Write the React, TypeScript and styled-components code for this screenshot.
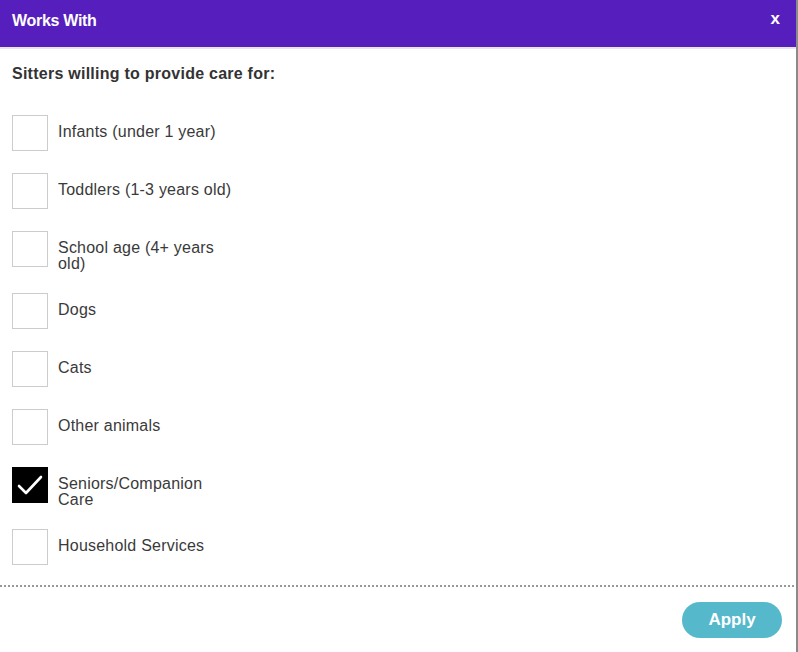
import React, { useState } from "react";
import styled, { createGlobalStyle } from "styled-components";

const GlobalStyle = createGlobalStyle`
  html, body {
    margin: 0;
    padding: 0;
    background: #ffffff;
  }
  body {
    font-family: "Liberation Sans", Arial, sans-serif;
    color: #333333;
  }
`;

const Modal = styled.div`
  width: 798px;
  height: 652px;
  box-sizing: border-box;
  border-right: 2px solid #8a8a8a;
  display: flex;
  flex-direction: column;
  background: #ffffff;
`;

const Header = styled.div`
  height: 49px;
  box-sizing: border-box;
  background: #561ebd;
  border-bottom: 2px solid #e6e6ea;
  display: flex;
  align-items: center;
  justify-content: space-between;
  padding: 0 16px 6px 12px;
  color: #ffffff;

  & span {
    font-weight: 700;
    font-size: 16px;
    letter-spacing: -0.3px;
  }
`;

const CloseButton = styled.button`
  background: none;
  border: none;
  padding: 0;
  color: #ffffff;
  font-family: "Liberation Sans", Arial, sans-serif;
  font-weight: 700;
  font-size: 17px;
  line-height: 1;
  cursor: pointer;
  margin-top: -4px;
`;

const Body = styled.div`
  padding: 16px 12px 0;
  flex: 1;
`;

const Title = styled.h3`
  margin: 0 0 32px;
  font-size: 16px;
  font-weight: 700;
  line-height: 18px;
  letter-spacing: 0.25px;
  color: #333333;
`;

const List = styled.div`
  display: flex;
  flex-direction: column;
  gap: 22px;
`;

const Row = styled.label`
  display: flex;
  align-items: flex-start;
  gap: 10px;
  cursor: pointer;
`;

const Box = styled.span<{ $checked: boolean }>`
  width: 36px;
  height: 36px;
  box-sizing: border-box;
  flex: none;
  border: 1px solid ${(p) => (p.$checked ? "#000000" : "#cccccc")};
  background: ${(p) => (p.$checked ? "#000000" : "#ffffff")};
  display: flex;
  align-items: center;
  justify-content: center;
`;

const Label = styled.span`
  padding-top: 9px;
  margin-bottom: -1px;
  max-width: 184px;
  font-size: 16px;
  line-height: 16px;
  letter-spacing: 0.22px;
  color: #3a3a3a;
`;

const Footer = styled.div`
  border-top: 2px dotted #999999;
  margin: 0 2px 0 0;
  padding: 15px 12px 14px 0;
  display: flex;
  justify-content: flex-end;
`;

const ApplyButton = styled.button`
  width: 100px;
  height: 36px;
  border: none;
  border-radius: 18px;
  background: #55b8cb;
  color: #ffffff;
  font-family: "Liberation Sans", Arial, sans-serif;
  font-weight: 700;
  font-size: 17px;
  cursor: pointer;
`;

const Check = () => (
  <svg width="26" height="22" viewBox="0 0 26 22" fill="none">
    <path d="M2 12 L9 19 L24 3" stroke="#ffffff" strokeWidth="2.6" strokeLinecap="round" strokeLinejoin="round" />
  </svg>
);

const options = [
  "Infants (under 1 year)",
  "Toddlers (1-3 years old)",
  "School age (4+ years old)",
  "Dogs",
  "Cats",
  "Other animals",
  "Seniors/Companion Care",
  "Household Services",
];

const App = () => {
  const [checked, setChecked] = useState<string[]>(["Seniors/Companion Care"]);

  const toggle = (o: string) =>
    setChecked((c) => (c.includes(o) ? c.filter((x) => x !== o) : [...c, o]));

  return (
    <>
      <GlobalStyle />
      <Modal>
        <Header>
          <span>Works With</span>
          <CloseButton>x</CloseButton>
        </Header>
        <Body>
          <Title>Sitters willing to provide care for:</Title>
          <List>
            {options.map((o) => {
              const on = checked.includes(o);
              return (
                <Row key={o} onClick={() => toggle(o)}>
                  <Box $checked={on}>{on && <Check />}</Box>
                  <Label>{o}</Label>
                </Row>
              );
            })}
          </List>
        </Body>
        <Footer>
          <ApplyButton>Apply</ApplyButton>
        </Footer>
      </Modal>
    </>
  );
};

export default App;
